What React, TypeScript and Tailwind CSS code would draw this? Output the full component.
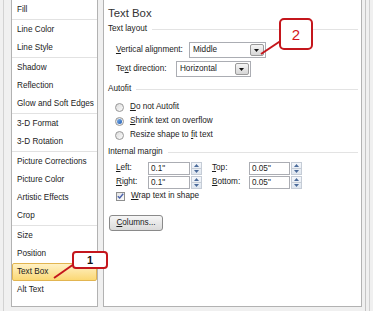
import type { ReactNode } from "react";

// Format Shape dialog: category list on the left, "Text Box" page on the right,
// with two red numbered callouts laid over it.

const groups: string[][] = [
  ["Fill"],
  ["Line Color", "Line Style"],
  ["Shadow", "Reflection", "Glow and Soft Edges"],
  ["3-D Format", "3-D Rotation"],
  ["Picture Corrections", "Picture Color", "Artistic Effects", "Crop"],
  ["Size", "Position", "Text Box", "Alt Text"],
];

function Header({ label, className = "" }: { label: string; className?: string }) {
  return (
    <div className={`flex items-center h-[14px] ${className}`}>
      <span className="leading-[14px]">{label}</span>
      <div className="flex-1 h-px bg-[#e3e3e3] ml-[5px]" />
    </div>
  );
}

function Dropdown({ value, width }: { value: string; width: string }) {
  return (
    <div className={`flex items-stretch h-[16px] border border-[#abadb3] bg-white ${width}`}>
      <span className="flex-1 pl-[3px] leading-[14px]">{value}</span>
      <div className="w-[14px] m-px flex items-center justify-center rounded-[2px] border border-[#9a9a9a] bg-gradient-to-b from-[#f5f5f5] to-[#d6d6d6]">
        <svg width="5" height="3" viewBox="0 0 5 3"><path d="M0 0h5L2.5 3z" fill="#111" /></svg>
      </div>
    </div>
  );
}

function Spin({ value, width }: { value: string; width: string }) {
  return (
    <div className={`flex items-stretch h-[13px] ${width}`}>
      <div className="flex-1 border border-[#abadb3] bg-white pl-[2px] leading-[11px]">{value}</div>
      <div className="w-[11px] ml-px flex flex-col border border-[#c5ccd6] bg-gradient-to-b from-[#f4f7fb] to-[#dfe6ef]">
        <div className="flex-1 flex items-center justify-center border-b border-[#c5ccd6]">
          <svg width="5" height="3" viewBox="0 0 5 3"><path d="M0 3h5L2.5 0z" fill="#4b6b9a" /></svg>
        </div>
        <div className="flex-1 flex items-center justify-center">
          <svg width="5" height="3" viewBox="0 0 5 3"><path d="M0 0h5L2.5 3z" fill="#4b6b9a" /></svg>
        </div>
      </div>
    </div>
  );
}

function Radio({ checked, children }: { checked?: boolean; children: ReactNode }) {
  return (
    <div className="flex items-center h-[14px] pl-[7px]">
      <div className="w-[9px] h-[9px] rounded-full border border-[#979797] bg-gradient-to-br from-[#dcdcdc] to-[#fbfbfb] flex items-center justify-center">
        {checked && <div className="w-[5px] h-[5px] rounded-full bg-gradient-to-br from-[#7fb2ea] to-[#1c5bb4]" />}
      </div>
      <span className="ml-[6px] leading-[14px]">{children}</span>
    </div>
  );
}

export default function App() {
  return (
    <div className="relative w-[373px] h-[311px] overflow-hidden bg-[#f0f0f0] flex font-['Liberation_Sans',Arial,sans-serif] text-[8.2px] text-[#1b1b1b]">
      <div className="ml-[3px] w-[8px] h-full border-l border-[#d2d2d2]" />

      {/* category list */}
      <div className="w-[87px] h-[307px] bg-white border-x border-b border-[#b2b2b2] pt-[1px]">
        {groups.map((g, gi) => (
          <div key={gi} className={gi > 0 ? "border-t border-[#e2e2e2] pt-px" : ""}>
            {g.map((item) =>
              item === "Text Box" ? (
                <div key={item} className="h-[18px] px-[4px] leading-[16px] border border-[#e2b551] rounded-[2px] bg-gradient-to-b from-[#fff1c4] to-[#fbd873]">
                  {item}
                </div>
              ) : (
                <div key={item} className="h-[18px] px-[5px] leading-[18px] whitespace-nowrap">
                  {item}
                </div>
              )
            )}
          </div>
        ))}
      </div>

      <div className="w-[5px]" />

      {/* Text Box page */}
      <div className="w-[260px] h-[307px] bg-white border-x border-b border-[#b2b2b2] pl-[4px] pr-[3px] pt-[5px]">
        <div className="h-[16px] text-[11.4px] leading-[16px] text-[#333]">Text Box</div>
        <Header label="Text layout" className="mt-px" />

        <div className="flex items-center h-[16px] mt-[6px] pl-[8px]">
          <span className="w-[73px]"><u>V</u>ertical alignment:</span>
          <Dropdown value="Middle" width="w-[77px]" />
        </div>
        <div className="flex items-center h-[16px] mt-[3px] pl-[8px]">
          <span className="w-[60px]">Te<u>x</u>t direction:</span>
          <Dropdown value="Horizontal" width="w-[75px]" />
        </div>

        <Header label="Autofit" className="mt-[5px]" />
        <div className="mt-[4px]">
          <Radio><u>D</u>o not Autofit</Radio>
          <Radio checked><u>S</u>hrink text on overflow</Radio>
          <Radio>Resize shape to <u>f</u>it text</Radio>
        </div>

        <Header label="Internal margin" className="mt-[3px]" />
        <div className="flex items-center h-[13px] mt-[3px] pl-[8px]">
          <span className="w-[32px]"><u>L</u>eft:</span>
          <Spin value={'0.1"'} width="w-[54px]" />
          <span className="w-[37px] ml-[10px]"><u>T</u>op:</span>
          <Spin value={'0.05"'} width="w-[53px]" />
        </div>
        <div className="flex items-center h-[13px] mt-px pl-[8px]">
          <span className="w-[32px]"><u>R</u>ight:</span>
          <Spin value={'0.1"'} width="w-[54px]" />
          <span className="w-[37px] ml-[10px]"><u>B</u>ottom:</span>
          <Spin value={'0.05"'} width="w-[53px]" />
        </div>
        <div className="flex items-center h-[14px] pl-[8px]">
          <div className="w-[9px] h-[9px] border border-[#8e8f8f] bg-gradient-to-br from-[#e4e4e4] to-[#fbfbfb] flex items-center justify-center">
            <svg width="7" height="6" viewBox="0 0 7 6"><path d="M0.8 3.2L2.7 5L6.2 0.8" fill="none" stroke="#4a63ad" strokeWidth="1.4" /></svg>
          </div>
          <span className="ml-[6px] leading-[14px]"><u>W</u>rap text in shape</span>
        </div>

        <div className="mt-[12px] ml-px w-[54px] h-[16px] rounded-[3px] border border-[#8a8a8a] bg-gradient-to-b from-[#f6f6f6] to-[#dadada] flex items-center justify-center">
          <span><u>C</u>olumns...</span>
        </div>
      </div>

      <div className="ml-[3px] w-[4px] h-full border-l border-[#c4c4c4]" />
      <div className="w-[4px] h-full border-l border-[#cfcfcf]" />

      {/* callouts */}
      <svg className="absolute inset-0 pointer-events-none" width="373" height="311">
        <line x1="74" y1="264" x2="54" y2="278" stroke="#c4161c" strokeWidth="2" />
        <line x1="282" y1="40" x2="261" y2="54" stroke="#c4161c" strokeWidth="2" />
      </svg>
      <div className="absolute left-[72px] top-[251px] w-[36px] h-[18px] rounded-[4px] border-2 border-[#c4161c] bg-white flex items-center justify-center">
        <span className="text-[11px] font-bold text-[#111] leading-none">1</span>
      </div>
      <div className="absolute left-[279px] top-[18px] w-[34px] h-[32px] rounded-[5px] border-2 border-[#c4161c] bg-white flex items-center justify-center">
        <span className="text-[15px] text-[#d4141a] leading-none">2</span>
      </div>
    </div>
  );
}
